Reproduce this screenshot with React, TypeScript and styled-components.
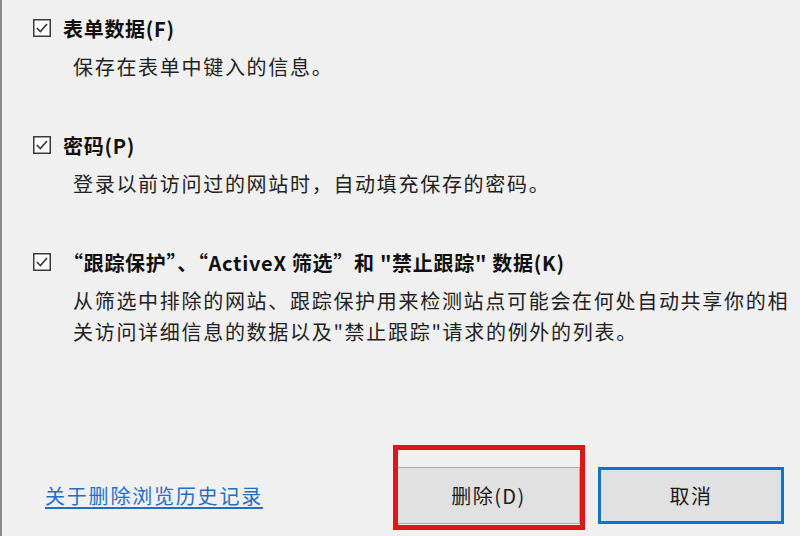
import styled, { createGlobalStyle } from 'styled-components';

const Global = createGlobalStyle`
  html, body {
    margin: 0;
    padding: 0;
    background: #f0f0f0;
  }
`;

const Dialog = styled.div`
  width: 800px;
  height: 536px;
  box-sizing: border-box;
  border-left: 2px solid #8a8a8a;
  background: #f0f0f0;
  display: flex;
  flex-direction: column;
  padding: 13px 16px 12px 31px;
  font-family: "Noto Sans CJK SC", "Noto Sans", sans-serif;
  color: #1a1a1a;
  overflow: hidden;
`;

const Option = styled.div`
  display: flex;
  flex-direction: column;
  gap: 8px;
  margin-bottom: 48px;
`;

const TitleRow = styled.label`
  display: flex;
  align-items: center;
  gap: 12px;
  height: 30px;
  font-size: 20px;
  font-weight: 700;
  letter-spacing: 0.7px;
  color: #111;

  svg {
    flex-shrink: 0;
  }
`;

const Desc = styled.p`
  margin: 0 0 0 40px;
  font-size: 20px;
  line-height: 31px;
  letter-spacing: 1.7px;
  color: #222;
  white-space: nowrap;
`;

const Footer = styled.div`
  margin-top: auto;
  display: flex;
  align-items: center;
  height: 57px;
`;

const HelpLink = styled.a`
  margin-left: 12px;
  font-size: 20px;
  letter-spacing: 1.8px;
  color: #1f6fc5;
  text-decoration: underline;
  text-underline-offset: 3px;
  cursor: pointer;
`;

const Buttons = styled.div`
  margin-left: auto;
  display: flex;
  gap: 18px;
`;

const Button = styled.button<{ $primary?: boolean; $width: number }>`
  width: ${p => p.$width}px;
  height: 57px;
  box-sizing: border-box;
  background: #e1e1e1;
  border: ${p => (p.$primary ? '3px solid #1b6fc4' : '1px solid #adadad')};
  box-shadow: ${p => (p.$primary ? 'inset 0 0 0 1px #cfe4f7' : 'none')};
  font-family: "Noto Sans CJK SC", "Noto Sans", sans-serif;
  font-size: 20px;
  letter-spacing: 1.4px;
  color: #1a1a1a;
  padding: 0;
`;

const Highlight = styled.div`
  position: relative;

  &::after {
    content: '';
    position: absolute;
    left: -4px;
    right: -5px;
    top: -22px;
    bottom: -6px;
    border: 5px solid #e01515;
    pointer-events: none;
  }
`;

const Check = () => (
  <svg width="18" height="18" viewBox="0 0 18 18">
    <rect x="0.75" y="0.75" width="16.5" height="16.5" fill="#fff" stroke="#3a3a3a" strokeWidth="1.5" />
    <polyline points="3.8,9 7.4,12.6 14,5" fill="none" stroke="#3a3a3a" strokeWidth="1.7" />
  </svg>
);

const options = [
  { title: '表单数据(F)', lines: ['保存在表单中键入的信息。'] },
  { title: '密码(P)', lines: ['登录以前访问过的网站时，自动填充保存的密码。'] },
  {
    title: '“跟踪保护”、“ActiveX 筛选”和 "禁止跟踪" 数据(K)',
    lines: [
      '从筛选中排除的网站、跟踪保护用来检测站点可能会在何处自动共享你的相',
      '关访问详细信息的数据以及"禁止跟踪"请求的例外的列表。',
    ],
  },
];

export default function App() {
  return (
    <>
      <Global />
      <Dialog>
        {options.map(o => (
          <Option key={o.title}>
            <TitleRow>
              <Check />
              {o.title}
            </TitleRow>
            <div>
              {o.lines.map(l => (
                <Desc key={l}>{l}</Desc>
              ))}
            </div>
          </Option>
        ))}
        <Footer>
          <HelpLink>关于删除浏览历史记录</HelpLink>
          <Buttons>
            <Highlight>
              <Button $width={183}>删除(D)</Button>
            </Highlight>
            <Button $primary $width={186}>取消</Button>
          </Buttons>
        </Footer>
      </Dialog>
    </>
  );
}
